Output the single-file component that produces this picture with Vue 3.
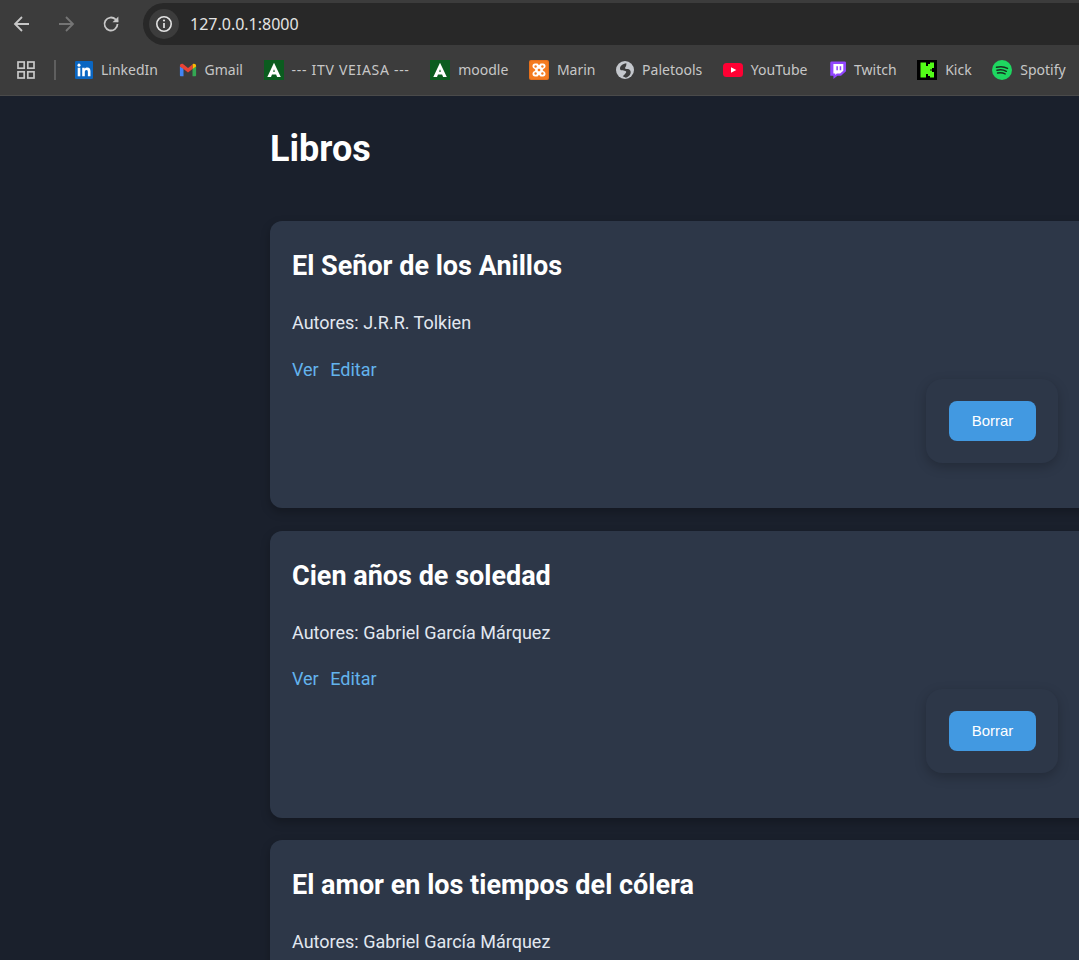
<script setup>
const marks = [
  { name: 'LinkedIn', icon: 'in', size: 18 },
  { name: 'Gmail', icon: 'gmail', size: 18 },
  { name: '--- ITV VEIASA ---', icon: 'junta', size: 20 },
  { name: 'moodle', icon: 'junta', size: 20 },
  { name: 'Marin', icon: 'xampp', size: 20 },
  { name: 'Paletools', icon: 'globe', size: 18 },
  { name: 'YouTube', icon: 'yt', size: 20 },
  { name: 'Twitch', icon: 'twitch', size: 18 },
  { name: 'Kick', icon: 'kick', size: 20 },
  { name: 'Spotify', icon: 'spotify', size: 20 }
]

const books = [
  { title: 'El Señor de los Anillos', authors: 'J.R.R. Tolkien' },
  { title: 'Cien años de soledad', authors: 'Gabriel García Márquez' },
  { title: 'El amor en los tiempos del cólera', authors: 'Gabriel García Márquez' }
]
</script>

<template>
  <div class="page">
    <header class="browser">
      <div class="toolbar">
        <button class="nav">
          <svg width="20" height="20" viewBox="0 0 20 20" fill="none" stroke="#c7c7c7" stroke-width="1.8"><path d="M17 10H3.500M10 3 3 10l7 7" /></svg>
        </button>
        <button class="nav">
          <svg width="20" height="20" viewBox="0 0 20 20" fill="none" stroke="#757575" stroke-width="1.8"><path d="M3 10h13.500M10 3l7 7-7 7" /></svg>
        </button>
        <button class="nav">
          <svg width="20" height="20" viewBox="0 0 20 20" fill="none"><path d="M16.500 10a6.500 6.500 0 1 1-1.900-4.600L17 7.600" stroke="#c7c7c7" stroke-width="1.800" /><path d="M17.400 2.400v5.900h-5.900z" fill="#c7c7c7" /></svg>
        </button>
        <div class="omnibox">
          <span class="site-info">
            <svg width="18" height="18" viewBox="0 0 18 18" fill="none"><circle cx="9" cy="9" r="7.200" stroke="#e3e3e3" stroke-width="1.600" /><path d="M9 8v5" stroke="#e3e3e3" stroke-width="1.700" /><circle cx="9" cy="5.500" r="1.100" fill="#e3e3e3" /></svg>
          </span>
          <span class="url">127.0.0.1:8000</span>
        </div>
      </div>

      <div class="bookmarks">
        <svg class="apps" width="18" height="18" viewBox="0 0 18 18" fill="none" stroke="#c7c7c7" stroke-width="1.700"><rect x="1" y="1" width="6.200" height="6.200" /><rect x="10.800" y="1" width="6.200" height="6.200" /><rect x="1" y="10.800" width="6.200" height="6.200" /><rect x="10.800" y="10.800" width="6.200" height="6.200" /></svg>
        <span class="sep"></span>
        <div class="marks">
          <div v-for="m in marks" :key="m.name" class="mark">
            <svg class="mark-icon" :width="m.size" :height="m.size" viewBox="0 0 20 20">
              <template v-if="m.icon === 'in'">
                <rect width="20" height="20" rx="1.500" fill="#0a66c2" />
                <rect x="3" y="7.500" width="2.900" height="9.500" fill="#fff" />
                <circle cx="4.450" cy="4.600" r="1.700" fill="#fff" />
                <path d="M8 7.500h2.800v1.300c.5-.9 1.500-1.500 2.900-1.500 2.500 0 3.500 1.500 3.500 4.200V17h-2.900v-4.800c0-1.300-.4-2.200-1.500-2.200-1.200 0-1.900 1-1.900 2.200V17H8z" fill="#fff" />
              </template>
              <template v-else-if="m.icon === 'gmail'">
                <path d="M1 6v9.800c0 .7.500 1.200 1.200 1.200H5V8z" fill="#4285f4" />
                <path d="M19 6v9.800c0 .7-.500 1.200-1.200 1.200H15V8z" fill="#34a853" />
                <path d="M15 3.900 15 9l4-3V5.500c0-2-2.300-3-3.800-1.800z" fill="#fbbc04" />
                <path d="M1 6V5.500c0-2 2.300-3 3.800-1.800L10 7.700l5-3.800V9l-5 3.800L5 9z" fill="#ea4335" />
              </template>
              <template v-else-if="m.icon === 'junta'">
                <rect width="20" height="20" fill="#0b5c1f" />
                <path d="M10 2.800 16.800 17h-3.700l-1-2.500H7l1.200-2.700h2.800L10 9.300 7 17H3.300z" fill="#fff" />
              </template>
              <template v-else-if="m.icon === 'xampp'">
                <rect width="20" height="20" rx="2" fill="#e8701a" />
                <rect x="1" y="1" width="18" height="18" rx="1.500" fill="#f47b20" />
                <path d="M6 3.500h2.500L10 5.200l1.500-1.700H14c1.600 0 2.500 1 2.500 2.500 0 1.500-.7 2.400-1.800 2.700L13.500 10l1.200 1.300c1.100.3 1.800 1.200 1.800 2.700s-.9 2.500-2.500 2.500h-2.500L10 14.800l-1.500 1.700H6c-1.600 0-2.500-1-2.500-2.500 0-1.500.7-2.400 1.800-2.700L6.500 10 5.300 8.700C4.200 8.400 3.500 7.500 3.500 6c0-1.500.9-2.500 2.500-2.500z" fill="#fff" />
                <circle cx="6.600" cy="6.500" r="1.200" fill="#f47b20" /><circle cx="13.400" cy="6.500" r="1.200" fill="#f47b20" /><circle cx="6.600" cy="13.500" r="1.200" fill="#f47b20" /><circle cx="13.400" cy="13.500" r="1.200" fill="#f47b20" />
                <rect x="8.800" y="8.800" width="2.400" height="2.400" fill="#f47b20" />
              </template>
              <template v-else-if="m.icon === 'globe'">
                <circle cx="10" cy="10" r="10" fill="#c4c7cc" />
                <path d="M11.500 2.500C7.500 3 4 5.800 4.500 9c.5 2.500 5 1.200 6.500 2.500 1.200 1.200-1 3.200-3.500 5.500l3.500 1.500c4-1 6.500-5 4.800-8-1.500-2.500-5.800-1.200-5.800-2.500 0-1.200 1.800-2 1.500-5.500z" fill="#3c3c3c" />
              </template>
              <template v-else-if="m.icon === 'yt'">
                <rect y="3" width="20" height="14" rx="3.500" fill="#ff0033" />
                <path d="M8 7.200 13.300 10 8 12.800z" fill="#fff" />
              </template>
              <template v-else-if="m.icon === 'twitch'">
                <path d="M2.500 2q0-1.500 1.500-1.500h14.500q1.500 0 1.500 1.500v9.500L14.500 16.500h-4L6 20v-3.500H2.500z" fill="#9146ff" />
                <path d="M6 3.300h11v7.500l-3.500 3H9.800L8 15.500v-1.700H6z" fill="#fff" />
                <path d="M9.300 5.800h1.700v4.500H9.300zM13 5.800h1.700v4.500H13z" fill="#9146ff" />
              </template>
              <template v-else-if="m.icon === 'kick'">
                <rect width="20" height="20" fill="#000" />
                <path d="M3.500 2.500H9V6h2V4h2V2.500h4V8h-2v1.500h-2v1h2V12h2v5.500h-4V16h-2v-2H9v3.500H3.500z" fill="#53fc18" />
              </template>
              <template v-else>
                <circle cx="10" cy="10" r="10" fill="#1ed760" />
                <path d="M4.500 7.300c3.700-1 7.800-.7 11 1.100M5 10.300c3-.8 6.500-.5 9.300 1M5.600 13.100c2.500-.6 5.200-.4 7.500.8" fill="none" stroke="#16301f" stroke-width="1.500" stroke-linecap="round" />
              </template>
            </svg>
            <span class="mark-name" :class="{ wide: m.name.startsWith('---') }">{{ m.name }}</span>
          </div>
        </div>
      </div>
    </header>

    <main class="content">
      <h1 class="heading">Libros</h1>
      <article v-for="b in books" :key="b.title" class="book">
        <h2 class="book-title">{{ b.title }}</h2>
        <p class="book-authors">Autores: {{ b.authors }}</p>
        <div class="book-links">
          <a class="link">Ver</a>
          <a class="link">Editar</a>
        </div>
        <div class="actions">
          <button class="delete">Borrar</button>
        </div>
      </article>
    </main>
  </div>
</template>

<style>
html, body {
  background: #1a202c;
  overflow: hidden;
}
</style>

<style scoped>
.page {
  width: 1079px;
  height: 960px;
  overflow: hidden;
  background: #1a202c;
  font-family: Roboto, "Liberation Sans", sans-serif;
}

.browser {
  background: #3c3c3c;
  border-bottom: 1px solid #4a4a4a;
}

.toolbar {
  display: flex;
  align-items: center;
  height: 48px;
}

.nav {
  width: 44px;
  height: 44px;
  flex: none;
  display: flex;
  align-items: center;
  justify-content: center;
  padding: 0;
  border: 0;
  background: none;
}

.nav:nth-child(3) {
  margin-left: 1px;
}

.omnibox {
  flex: 1;
  height: 42px;
  margin-left: 10px;
  margin-right: -30px;
  display: flex;
  align-items: center;
  gap: 11px;
  padding-left: 6px;
  border-radius: 21px;
  background: #282828;
}

.site-info {
  width: 30px;
  height: 30px;
  display: flex;
  align-items: center;
  justify-content: center;
  border-radius: 50%;
  background: #3c3c3c;
}

.url {
  font-family: "Noto Sans", "Open Sans", sans-serif;
  font-size: 16px;
  color: #e3e3e3;
}

.bookmarks {
  display: flex;
  align-items: center;
  height: 47px;
  padding-left: 17px;
  padding-bottom: 4px;
  box-sizing: border-box;
  white-space: nowrap;
}

.apps {
  flex: none;
}

.sep {
  width: 2px;
  height: 20px;
  margin: 0 19px;
  background: #5f5f5f;
}

.marks {
  display: flex;
  align-items: center;
  gap: 20.600px;
}

.mark {
  display: flex;
  align-items: center;
  gap: 8px;
}

.mark-icon {
  flex: none;
}

.mark-name {
  font-family: "Noto Sans", "Open Sans", sans-serif;
  font-size: 14px;
  color: #c7c7c7;
}

.mark-name.wide {
  letter-spacing: 0.7px;
}

.content {
  padding: 29px 0 0 270px;
}

.heading {
  margin: 0 0 48px;
  font-size: 36px;
  line-height: 48px;
  font-weight: 700;
  color: #fff;
}

.book {
  width: 830px;
  height: 287px;
  box-sizing: border-box;
  margin-bottom: 22.600px;
  padding: 23px 22px 22px;
  display: flex;
  flex-direction: column;
  border-radius: 12px;
  background: #2d3748;
  box-shadow: 0 4px 10px rgba(0, 0, 0, 0.25);
}

.book-title {
  margin: 0 0 22px;
  font-size: 27px;
  line-height: 44px;
  font-weight: 700;
  color: #fff;
}

.book-authors {
  margin: 0 0 23px;
  font-size: 18px;
  line-height: 26px;
  color: #e2e8f0;
}

.book-links {
  display: flex;
  gap: 11.500px;
  height: 20px;
  align-items: center;
}

.link {
  font-size: 18px;
  color: #63b3ed;
}

.actions {
  align-self: flex-end;
  margin-right: 20px;
  padding: 22px 22px 22px 23px;
  border-radius: 16px;
  background: #2d3748;
  box-shadow: 0 4px 12px rgba(0, 0, 0, 0.22);
}

.delete {
  display: block;
  width: 87px;
  height: 40px;
  padding: 0 0 1px;
  border: 0;
  border-radius: 8px;
  background: #4299e1;
  color: #fff;
  font-family: "Liberation Sans", Arial, sans-serif;
  font-size: 15px;
}
</style>
